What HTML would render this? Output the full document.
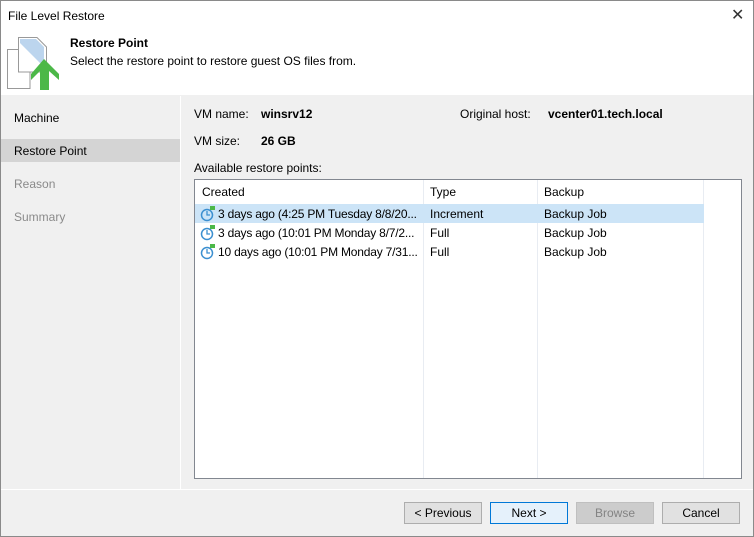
<!DOCTYPE html><html><head><style>
body{margin:0;width:754px;height:537px;overflow:hidden;font-family:"Liberation Sans",sans-serif;font-size:12px;color:#000;background:#fff}
.win{position:absolute;left:0;top:0;width:752px;height:535px;border:1px solid #8a8a8a;background:#f0f0f0}
.abs{position:absolute}
.btn{position:absolute;top:501px;width:76px;height:20px;border:1px solid #adadad;background:#e1e1e1;text-align:center;line-height:20px;font-size:12px}
</style></head><body><div class="win">
<div class="abs" style="left:0;top:0;width:752px;height:94px;background:#fff"></div>
<div class="abs" style="left:7px;top:8px;font-size:12px">File Level Restore</div>
<div class="abs" style="left:730px;top:4px;font-size:16px;color:#333">✕</div>
<svg class="abs" style="left:-1px;top:-1px" width="64" height="95"><path d="M7.5 49.5H30V88.5H7.5Z" fill="#fff" stroke="#999"/><path d="M18.5 37.5H37L46.5 47V72H18.5Z" fill="#fff" stroke="#999"/><path d="M20 39H36L44 47V63H40L20 43Z" fill="#bcd5ee"/><path d="M44 59L59 74V80L49 71V90H40V71L31 80V74Z" fill="#4cb848"/></svg>
<div class="abs" style="left:69px;top:35px;font-weight:bold">Restore Point</div>
<div class="abs" style="left:69px;top:53px">Select the restore point to restore guest OS files from.</div>
<div class="abs" style="left:179px;top:95px;width:1px;height:393px;background:#fff"></div>
<div class="abs" style="left:13px;top:110px">Machine</div>
<div class="abs" style="left:0;top:138px;width:179px;height:23px;background:#d4d4d4"></div>
<div class="abs" style="left:13px;top:143px">Restore Point</div>
<div class="abs" style="left:13px;top:176px;color:#8a8a8a">Reason</div>
<div class="abs" style="left:13px;top:209px;color:#8a8a8a">Summary</div>
<div class="abs" style="left:193px;top:106px">VM name:</div>
<div class="abs" style="left:260px;top:106px;font-weight:bold">winsrv12</div>
<div class="abs" style="left:459px;top:106px">Original host:</div>
<div class="abs" style="left:547px;top:106px;font-weight:bold">vcenter01.tech.local</div>
<div class="abs" style="left:193px;top:133px">VM size:</div>
<div class="abs" style="left:260px;top:133px;font-weight:bold">26 GB</div>
<div class="abs" style="left:193px;top:160px">Available restore points:</div>
<div class="abs" style="left:193px;top:178px;width:546px;height:298px;border:1px solid #828790;background:#fff;overflow:hidden">
<div class="abs" style="left:228px;top:0;width:1px;height:298px;background:#e8ecf2"></div>
<div class="abs" style="left:342px;top:0;width:1px;height:298px;background:#e8ecf2"></div>
<div class="abs" style="left:508px;top:0;width:1px;height:298px;background:#e8ecf2"></div>
<div class="abs" style="left:7px;top:5px">Created</div><div class="abs" style="left:235px;top:5px">Type</div><div class="abs" style="left:349px;top:5px">Backup</div>
<div class="abs" style="left:0;top:24px;width:509px;height:19px;background:#cce4f7"></div>
<div class="abs" style="left:23px;top:27px;letter-spacing:-0.2px">3 days ago (4:25 PM Tuesday 8/8/20...</div><div class="abs" style="left:235px;top:27px">Increment</div><div class="abs" style="left:349px;top:27px">Backup Job</div>
<div class="abs" style="left:23px;top:46px;letter-spacing:-0.2px">3 days ago (10:01 PM Monday 8/7/2...</div><div class="abs" style="left:235px;top:46px">Full</div><div class="abs" style="left:349px;top:46px">Backup Job</div>
<div class="abs" style="left:23px;top:65px;letter-spacing:-0.2px">10 days ago (10:01 PM Monday 7/31...</div><div class="abs" style="left:235px;top:65px">Full</div><div class="abs" style="left:349px;top:65px">Backup Job</div>
<svg class="abs" style="left:5px;top:25px" width="16" height="60"><g id="i"><circle cx="7" cy="10" r="5.5" fill="none" stroke="#3b8fd0" stroke-width="1.5"/><path d="M7 6V10H10" stroke="#3b8fd0" fill="none" stroke-width="1.3"/><path d="M10 1H15V5H10Z" fill="#4cb848"/></g><use href="#i" y="19"/><use href="#i" y="38"/></svg>
</div>
<div class="abs" style="left:0;top:488px;width:752px;height:1px;background:#fff"></div>
<div class="btn" style="left:403px">&lt; Previous</div>
<div class="btn" style="left:489px;border-color:#0078d7;background:#e5f1fb">Next &gt;</div>
<div class="btn" style="left:575px;border-color:#bfbfbf;background:#cccccc;color:#838383">Browse</div>
<div class="btn" style="left:661px">Cancel</div>
</div></body></html>
